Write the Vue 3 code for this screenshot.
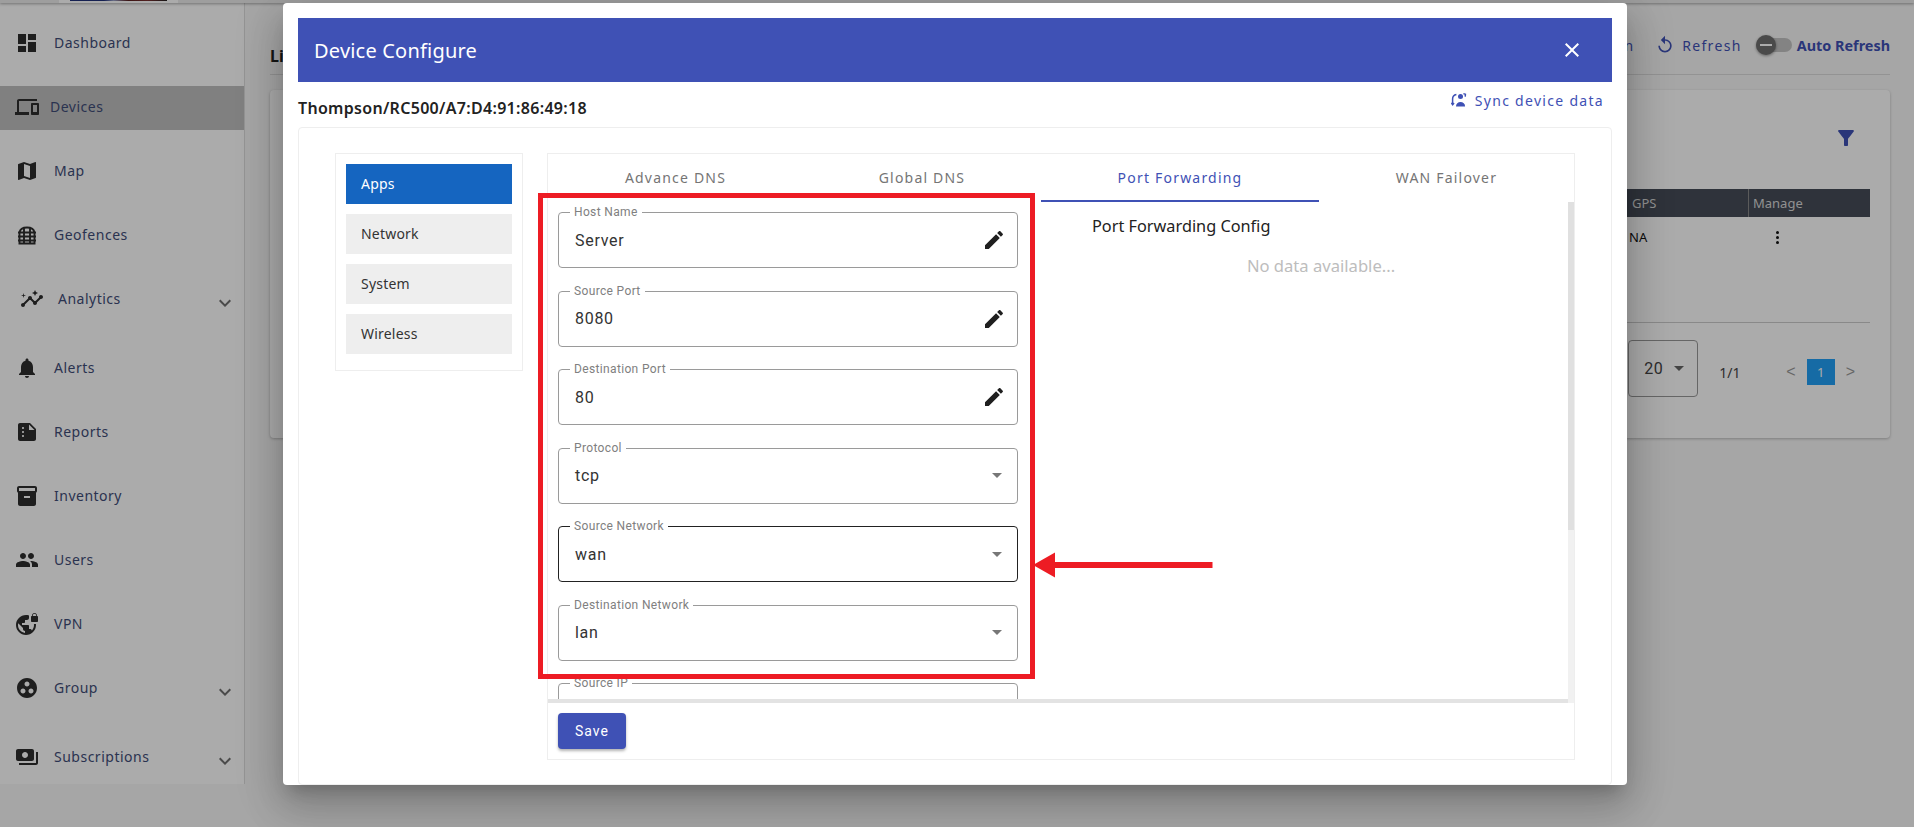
<script setup>
const icons = {
  dashboard: 'M3 13h8V3H3v10zm0 8h8v-6H3v6zm10 0h8V11h-8v10zm0-18v6h8V3h-8z',
  devices: 'M4 6h18V4H4c-1.1 0-2 .9-2 2v11H0v3h14v-3H4V6zm19 2h-6c-.55 0-1 .45-1 1v10c0 .55.45 1 1 1h6c.55 0 1-.45 1-1V9c0-.55-.45-1-1-1zm-1 9h-4v-7h4v7z',
  map: 'M20.5 3l-.16.03L15 5.1 9 3 3.36 4.9c-.21.07-.36.25-.36.48V20.5c0 .28.22.5.5.5l.16-.03L9 18.9l6 2.1 5.64-1.9c.21-.07.36-.25.36-.48V3.5c0-.28-.22-.5-.5-.5zM15 19l-6-2.11V5l6 2.11V19z',
  fence: 'M4.5 20.5V9.5C5 6.5 8 4.5 12 4.5s7 2 7.5 5v11M3 9.5h18M3 13.5h18M3 17.5h18M3.5 20.5h17M9 5v15.5M15 5v15.5',
  insights: 'M21 8c-1.45 0-2.26 1.44-1.93 2.51l-3.55 3.56c-.3-.09-.74-.09-1.04 0l-2.55-2.55C12.27 10.45 11.46 9 10 9c-1.45 0-2.27 1.44-1.93 2.52l-4.56 4.55C2.44 15.74 1 16.55 1 18c0 1.1.9 2 2 2 1.45 0 2.26-1.44 1.93-2.51l4.55-4.56c.3.09.74.09 1.04 0l2.55 2.55C12.73 16.55 13.54 18 15 18c1.45 0 2.27-1.44 1.93-2.52l3.56-3.55c1.07.33 2.51-.48 2.51-1.93 0-1.1-.9-2-2-2zM15 9l.94-2.07L18 6l-2.06-.93L15 3l-.92 2.07L12 6l2.08.93zM3.5 11L4 9l2-.5L4 8l-.5-2L3 8l-2 .5L3 9z',
  bell: 'M12 22c1.1 0 2-.9 2-2h-4c0 1.1.89 2 2 2zm6-6v-5c0-3.07-1.64-5.64-4.5-6.32V4c0-.83-.67-1.5-1.5-1.5s-1.5.67-1.5 1.5v.68C7.63 5.36 6 7.92 6 11v5l-2 2v1h16v-1l-2-2z',
  reports: 'M15 3H5c-1.1 0-2 .9-2 2v14c0 1.1.9 2 2 2h14c1.1 0 2-.9 2-2V9l-6-6zM8 17c-.55 0-1-.45-1-1s.45-1 1-1 1 .45 1 1-.45 1-1 1zm0-4c-.55 0-1-.45-1-1s.45-1 1-1 1 .45 1 1-.45 1-1 1zm0-4c-.55 0-1-.45-1-1s.45-1 1-1 1 .45 1 1-.45 1-1 1zm6 1V4.5l5.5 5.5H14z',
  inventory: 'M20 2H4c-1 0-2 .9-2 2v3.01c0 .72.43 1.34 1 1.69V20c0 1.1 1.1 2 2 2h14c.9 0 2-.9 2-2V8.7c.57-.35 1-.97 1-1.69V4c0-1.1-1-2-2-2zm-5 12H9v-2h6v2zm5-7H4V4l16-.02V7z',
  people: 'M16 11c1.66 0 2.99-1.34 2.99-3S17.66 5 16 5c-1.66 0-3 1.34-3 3s1.34 3 3 3zm-8 0c1.66 0 2.99-1.34 2.99-3S9.66 5 8 5C6.34 5 5 6.34 5 8s1.34 3 3 3zm0 2c-2.33 0-7 1.17-7 3.5V19h14v-2.5c0-2.33-4.67-3.5-7-3.5zm8 0c-.29 0-.62.02-.97.05 1.16.84 1.97 1.97 1.97 3.45V19h6v-2.5c0-2.33-4.67-3.5-7-3.5z',
  vpn: 'M22 4v-.5C22 2.12 20.88 1 19.5 1S17 2.12 17 3.5V4c-.55 0-1 .45-1 1v4c0 .55.45 1 1 1h5c.55 0 1-.45 1-1V5c0-.55-.45-1-1-1zm-.8 0h-3.4v-.5c0-.94.76-1.7 1.7-1.7s1.7.76 1.7 1.7V4zm-2.28 8c.04.33.08.66.08 1 0 2.08-.8 3.97-2.1 5.39-.26-.81-1-1.39-1.9-1.39h-1v-3c0-.55-.45-1-1-1H7v-2h2c.55 0 1-.45 1-1V8h2c1.1 0 2-.9 2-2V3.46c-.95-.3-1.95-.46-3-.46C5.48 3 1 7.48 1 13s4.48 10 10 10 10-4.48 10-10c0-.34-.02-.67-.05-1h-2.03zM10 20.93c-3.95-.49-7-3.85-7-7.93 0-.62.08-1.21.21-1.79L8 16v1c0 1.1.9 2 2 2v1.93z',
  group: 'M12 2C6.48 2 2 6.48 2 12s4.48 10 10 10 10-4.48 10-10S17.52 2 12 2zM8 17.5c-1.38 0-2.5-1.12-2.5-2.5s1.12-2.5 2.5-2.5 2.5 1.12 2.5 2.5-1.12 2.5-2.5 2.5zM9.5 8c0-1.38 1.12-2.5 2.5-2.5s2.5 1.12 2.5 2.5-1.12 2.5-2.5 2.5S9.5 9.38 9.5 8zm6.5 9.5c-1.38 0-2.5-1.12-2.5-2.5s1.12-2.5 2.5-2.5 2.5 1.12 2.5 2.5-1.12 2.5-2.5 2.5z',
  payments: 'M19 14V6c0-1.1-.9-2-2-2H3c-1.1 0-2 .9-2 2v8c0 1.1.9 2 2 2h14c1.1 0 2-.9 2-2zm-9-1c-1.66 0-3-1.34-3-3s1.34-3 3-3 3 1.34 3 3-1.34 3-3 3zm13-6v11c0 1.1-.9 2-2 2H4v-2h17V7h2z'
}
const navItems = [
  { label: 'Dashboard', icon: 'dashboard' },
  { label: 'Devices', icon: 'devices', kind: 'active' },
  { label: 'Map', icon: 'map' },
  { label: 'Geofences', icon: 'fence', kind: 'stroked' },
  { label: 'Analytics', icon: 'insights', kind: 'shifted', more: true },
  { label: 'Alerts', icon: 'bell' },
  { label: 'Reports', icon: 'reports' },
  { label: 'Inventory', icon: 'inventory' },
  { label: 'Users', icon: 'people' },
  { label: 'VPN', icon: 'vpn' },
  { label: 'Group', icon: 'group', more: true },
  { label: 'Subscriptions', icon: 'payments', more: true }
]
const menus = ['Apps', 'Network', 'System', 'Wireless']
const tabs = ['Advance DNS', 'Global DNS', 'Port Forwarding', 'WAN Failover']
const fields = [
  { label: 'Host Name', value: 'Server', type: 'edit' },
  { label: 'Source Port', value: '8080', type: 'edit' },
  { label: 'Destination Port', value: '80', type: 'edit' },
  { label: 'Protocol', value: 'tcp', type: 'select' },
  { label: 'Source Network', value: 'wan', type: 'select', focused: true },
  { label: 'Destination Network', value: 'lan', type: 'select' },
  { label: 'Source IP', value: '', type: 'edit' }
]
</script>

<template>
  <div class="page">
    <header class="appbar">
      <div class="logo"><div class="logo-art"></div></div>
    </header>
    <div class="body">
      <aside class="sidebar">
        <nav class="nav">
          <div
            v-for="item in navItems"
            :key="item.label"
            class="nav-item"
            :class="[item.kind, { expandable: item.more }]"
          >
            <svg class="nav-icon" viewBox="0 0 24 24"><path :d="icons[item.icon]" /></svg>
            <span class="nav-label">{{ item.label }}</span>
            <svg v-if="item.more" class="chevron" viewBox="0 0 24 24"><path d="M16.59 8.59L12 13.17 7.41 8.59 6 10l6 6 6-6z" /></svg>
          </div>
        </nav>
      </aside>
      <main class="main">
        <div class="topline">
          <strong class="list-title">Li</strong>
          <div class="actions">
            <span class="action-text">n</span>
            <svg class="refresh-icon" viewBox="0 0 24 24"><path d="M12 5V1L7 6l5 5V7c3.31 0 6 2.69 6 6s-2.69 6-6 6-6-2.69-6-6H4c0 4.42 3.58 8 8 8s8-3.58 8-8-3.58-8-8-8z" /></svg>
            <span class="action-text refresh-text">Refresh</span>
            <span class="toggle"><span class="knob"><span class="knob-dash"></span></span></span>
            <strong class="auto">Auto Refresh</strong>
          </div>
        </div>
        <section class="card">
          <div class="filter-row">
            <svg class="filter" viewBox="0 0 24 24"><path d="M4.25 5.61C6.27 8.2 10 13 10 13v6c0 .55.45 1 1 1h2c.55 0 1-.45 1-1v-6s3.72-4.8 5.74-7.39C20.25 4.95 19.78 4 18.95 4H5.04c-.83 0-1.3.95-.79 1.61z" /></svg>
          </div>
          <div class="t-head">
            <span></span>
            <span class="t-gps">GPS</span>
            <span class="t-manage">Manage</span>
          </div>
          <div class="t-row">
            <span></span>
            <span class="t-na">NA</span>
            <span class="kebab"><i></i><i></i><i></i></span>
          </div>
          <div class="pager">
            <div class="page-size"><span>20</span><i class="caret dark"></i></div>
            <span class="count">1/1</span>
            <span class="prev">&lt;</span>
            <span class="page-btn">1</span>
            <span class="next">&gt;</span>
          </div>
        </section>
      </main>
    </div>

    <div class="backdrop"></div>

    <div class="modal">
      <div class="modal-head">
        <h2>Device Configure</h2>
        <svg class="close" viewBox="0 0 24 24"><path d="M19 6.41L17.59 5 12 10.59 6.41 5 5 6.41 10.59 12 5 17.59 6.41 19 12 13.41 17.59 19 19 17.59 13.41 12z" /></svg>
      </div>
      <div class="sub-row">
        <strong class="device">Thompson/RC500/A7:D4:91:86:49:18</strong>
        <div class="sync">
          <svg class="sync-icon" viewBox="0 0 16 16">
            <circle cx="9.5" cy="4.6" r="2.5" />
            <path d="M5 14.5c0-3 2-4.6 4.5-4.6s4.6 1.6 4.6 4.6z" />
            <path class="sync-arc" d="M1.6 12.5V7C1.6 4.4 3 3 5.4 2.6" />
            <path class="sync-arc" d="M0.4 10.8l1.2 2 1.4-1.8" />
            <path class="sync-arc" d="M12.4 1.6l2 .6-.2 2.4" />
          </svg>
          <span>Sync device data</span>
        </div>
      </div>
      <div class="config-card">
        <div class="menu">
          <div v-for="(m, i) in menus" :key="m" class="menu-item" :class="{ selected: i === 0 }">{{ m }}</div>
        </div>
        <div class="panel">
          <div class="tabs">
            <div v-for="(t, i) in tabs" :key="t" class="tab" :class="{ current: i === 2 }">{{ t }}</div>
          </div>
          <div class="scroller">
            <div class="form">
              <div v-for="f in fields" :key="f.label" class="field" :class="{ focused: f.focused }">
                <span class="field-label">{{ f.label }}</span>
                <span class="field-value">{{ f.value }}</span>
                <svg v-if="f.type === 'edit'" class="pencil" viewBox="0 0 24 24"><path d="M3 17.25V21h3.75L17.81 9.94l-3.75-3.75L3 17.25zM20.71 7.04c.39-.39.39-1.02 0-1.41l-2.34-2.34c-.39-.39-1.02-.39-1.41 0l-1.83 1.83 3.75 3.75 1.83-1.83z" /></svg>
                <i v-else class="caret"></i>
              </div>
            </div>
            <div class="side">
              <div class="side-title">Port Forwarding Config</div>
              <div class="side-empty">No data available...</div>
            </div>
            <div class="track-v"><div class="thumb-v"></div></div>
            <div class="track-h"></div>
          </div>
          <div class="panel-foot">
            <button class="save" type="button">Save</button>
          </div>
        </div>
      </div>
      <div class="callout"></div>
      <svg class="arrow" width="180" height="26" viewBox="0 0 180 26">
        <path d="M0 13L22 0.5V10H179.5V16H22V25.5z" />
      </svg>
    </div>
  </div>
</template>

<style>
html, body { margin: 0; padding: 0; overflow: hidden; }
</style>

<style scoped>
.page {
  position: relative;
  width: 1914px;
  height: 827px;
  overflow: hidden;
  display: flex;
  flex-direction: column;
  background: #f8f8f8;
  font-family: "Noto Sans", "Open Sans", sans-serif;
  color: #333;
}
.appbar {
  height: 3px;
  flex: none;
  background: #ececec;
  box-shadow: 0 1px 3px rgba(0, 0, 0, 0.35);
  position: relative;
  display: flex;
}
.logo { margin-left: 59px; width: 119px; background: #fff; padding: 0 11px; box-sizing: border-box; }
.logo-art { height: 1px; background: linear-gradient(90deg, #20307a 0%, #20307a 35%, #9aa2c8 45%, #5a2020 60%, #7a3030 80%, #222 100%); }
.body { flex: 1; display: flex; min-height: 0; }
.sidebar {
  width: 244px;
  height: 781px;
  flex: none;
  background: #fff;
  border-right: 1px solid #ddd;
}
.nav { display: flex; flex-direction: column; padding-top: 19px; }
.nav-item {
  height: 44px;
  margin-bottom: 20px;
  display: flex;
  align-items: center;
  padding-left: 15px;
  box-sizing: border-box;
  color: #3f4d78;
  font-size: 14px;
  letter-spacing: 0.5px;
}
.nav-icon { width: 24px; height: 24px; fill: #2e2e2e; flex: none; margin: 0 15px 2px 0; }
.nav-label { margin-bottom: 4px; }
.nav-item.active { background: #bfbfbf; }
.nav-item.active .nav-icon { margin-right: 11px; }
.nav-item.shifted { padding-left: 20px; }
.nav-item.shifted .nav-icon { margin-right: 14px; }
.nav-item.stroked .nav-icon { fill: none; stroke: #2e2e2e; stroke-width: 1.9; }
.nav-item.expandable { height: 49px; padding-bottom: 5px; position: relative; }
.chevron { position: absolute; left: 213px; top: 13px; width: 24px; height: 24px; fill: #6f6f6f; }

.main { flex: 1; margin: 0 24px 0 25px; min-width: 0; }
.topline {
  height: 72px;
  box-sizing: border-box;
  border-bottom: 1px solid #dcdcdc;
  display: flex;
  justify-content: space-between;
  align-items: flex-end;
  padding-bottom: 8px;
}
.list-title { font-size: 16px; font-weight: 700; color: #222; line-height: 20px; }
.actions { display: flex; align-items: center; height: 24px; margin-bottom: 9px; }
.action-text { font-size: 14px; letter-spacing: 1px; color: #3f51b5; }
.refresh-text { letter-spacing: 1.35px; }
.refresh-icon { width: 20px; height: 20px; fill: #3f51b5; margin-left: 21px; margin-right: 7px; }
.toggle { position: relative; width: 36px; height: 14px; border-radius: 7px; background: #c4c4c4; margin: 0 5px 0 14px; }
.knob {
  position: absolute; left: 0; top: -3px; width: 20px; height: 20px; border-radius: 50%;
  background: #6f6f6f; box-shadow: 0 1px 3px rgba(0,0,0,.4); display: flex; align-items: center; justify-content: center;
}
.knob-dash { width: 12px; height: 2px; background: #fff; }
.auto { font-size: 14.4px; font-weight: 700; color: #3f51b5; }
.card {
  margin-top: 15px;
  height: 348px;
  background: #fff;
  border-radius: 4px;
  box-shadow: 0 1px 3px rgba(0, 0, 0, 0.25);
  padding: 0 20px;
  box-sizing: border-box;
}
.filter-row { height: 99px; display: flex; justify-content: flex-end; padding: 36px 12px 0 0; box-sizing: border-box; }
.filter { width: 24px; height: 24px; fill: #3f51b5; }
.t-head {
  display: grid;
  grid-template-columns: 1fr 120px 122px;
  height: 28px;
  background: #464c58;
  color: #d8d8d8;
  font-size: 13px;
  line-height: 28px;
}
.t-gps { padding-left: 4px; }
.t-manage { padding-left: 4px; border-left: 1px solid #888; }
.t-row {
  display: grid;
  grid-template-columns: 1fr 120px 122px;
  height: 106px;
  box-sizing: border-box;
  border-bottom: 1px solid #ccc;
  font-size: 13px;
  color: #111;
  padding-top: 10px;
}
.t-na { padding-left: 1px; line-height: 20px; }
.kebab { display: flex; flex-direction: column; gap: 2px; padding: 4px 0 0 28px; }
.kebab i { width: 3px; height: 3px; border-radius: 50%; background: #111; display: block; }
.pager { display: flex; align-items: center; justify-content: flex-end; height: 90px; padding-right: 15px; box-sizing: border-box; color: #444; font-size: 14px; }
.page-size {
  width: 70px; height: 57px; box-sizing: border-box; border: 1px solid #999; border-radius: 4px;
  display: flex; align-items: center; padding-left: 15px; font-family: Roboto, sans-serif; font-size: 16px; gap: 11px;
  letter-spacing: 0.5px;
}
.count { margin-left: 21px; margin-top: 8px; font-size: 14px; width: 67px; }
.prev, .next { color: #999; font-size: 16px; font-family: "Liberation Sans", sans-serif; margin-top: 8px; }
.prev { margin-right: 11px; }
.next { margin-left: 11px; }
.page-btn { width: 28px; height: 26px; margin-top: 8px; background: #21a0f6; color: #fff; text-align: center; line-height: 26px; font-size: 13px; }

.backdrop { position: absolute; inset: 0; background: rgba(0, 0, 0, 0.33); }

.modal {
  position: absolute;
  left: 283px;
  top: 3px;
  width: 1344px;
  height: 782px;
  box-sizing: border-box;
  padding: 15px 15px 0;
  background: #fff;
  border-radius: 4px;
  box-shadow: 0 11px 15px -7px rgba(0,0,0,.2), 0 24px 38px 3px rgba(0,0,0,.14), 0 9px 46px 8px rgba(0,0,0,.12);
  display: flex;
  flex-direction: column;
}
.modal-head {
  height: 64px;
  flex: none;
  background: #3f51b5;
  color: #fff;
  display: flex;
  align-items: center;
  justify-content: space-between;
  padding: 0 28px 0 16px;
}
.modal-head h2 { margin: 0; font-size: 20px; font-weight: 400; letter-spacing: 0.2px; }
.close { width: 24px; height: 24px; fill: #fff; }
.sub-row {
  height: 45px;
  flex: none;
  display: flex;
  justify-content: space-between;
}
.device { font-size: 16px; font-weight: 600; color: #222; line-height: 20px; padding-top: 16px; letter-spacing: 0.3px; }
.sync { display: flex; align-items: center; height: 36px; padding-right: 8px; color: #3f51b5; font-size: 14px; letter-spacing: 1.3px; gap: 8px; }
.sync-icon { width: 16px; height: 16px; fill: #3f51b5; }
.sync-arc { fill: none; stroke: #3f51b5; stroke-width: 1.5; }
.config-card {
  flex: 1;
  display: flex;
  box-sizing: border-box;
  border: 1px solid #eee;
  border-radius: 4px;
  padding: 25px 0 0 36px;
  min-height: 0;
}
.menu {
  width: 188px;
  height: 218px;
  box-sizing: border-box;
  border: 1px solid #eee;
  padding: 10px;
  display: flex;
  flex-direction: column;
  gap: 10px;
  flex: none;
}
.menu-item {
  height: 40px;
  flex: none;
  background: #eee;
  color: #333;
  font-size: 14px;
  line-height: 40px;
  padding-left: 15px;
  letter-spacing: 0.2px;
}
.menu-item.selected { background: #1565c0; color: #fff; }
.panel {
  width: 1028px;
  height: 607px;
  margin-left: 24px;
  flex: none;
  display: flex;
  flex-direction: column;
  box-sizing: border-box;
  border: 1px solid #eee;
}
.tabs { display: grid; grid-template-columns: 255px 238px 278px 255px; grid-template-rows: 48px; height: 48px; flex: none; }
.tab {
  text-align: center;
  font-size: 14px;
  letter-spacing: 1.2px;
  line-height: 48px;
  color: #757575;
  box-sizing: border-box;
}
.tab.current { color: #3f51b5; border-bottom: 2px solid #3f51b5; }
.scroller { position: relative; height: 501px; flex: none; overflow: hidden; display: flex; }
.form { width: 460px; margin-left: 10px; padding-top: 10px; display: flex; flex-direction: column; gap: 22.5px; flex: none; }
.field {
  position: relative;
  height: 56px;
  flex: none;
  box-sizing: border-box;
  border: 1px solid #9a9a9a;
  border-radius: 4px;
  display: flex;
  align-items: center;
  justify-content: space-between;
  padding: 0 11px 0 16px;
  font-family: Roboto, sans-serif;
}
.field.focused { border-color: #222; }
.field-label {
  position: absolute;
  left: 11px;
  top: -8px;
  padding: 0 4px;
  background: #fff;
  color: #808080;
  font-size: 12px;
  line-height: 14px;
  letter-spacing: 0.35px;
}
.field-value { font-size: 16px; letter-spacing: 0.7px; color: #333; }
.pencil { width: 24px; height: 24px; fill: #1f1f1f; }
.caret { display: block; width: 0; height: 0; border-left: 5px solid transparent; border-right: 5px solid transparent; border-top: 5px solid #777; margin-right: 4px; }
.caret.dark { border-top-color: #666; margin-right: 0; }
.side { margin-left: 56px; width: 494px; padding-top: 12px; }
.side-title { padding-left: 18px; font-size: 16.3px; line-height: 24px; color: #222; }
.side-empty { margin-top: 16px; text-align: center; font-size: 16.6px; line-height: 24px; color: #bdbdbd; }
.track-v { position: absolute; right: 0; top: 0; bottom: 0; width: 6px; background: #f1f1f1; }
.thumb-v { height: 328px; background: #e0e0e0; }
.track-h { position: absolute; left: 0; right: 6px; bottom: 0; height: 4px; background: #e3e3e3; }
.panel-foot { flex: 1; padding: 10px 0 0 10px; }
.save {
  width: 68px; height: 36px; border: 0; border-radius: 4px; background: #3f51b5; color: #fff;
  font-family: Roboto, sans-serif; font-size: 14px; letter-spacing: 1px;
  box-shadow: 0 2px 3px rgba(0,0,0,.3);
}
.callout {
  position: absolute;
  left: 255px;
  top: 190px;
  width: 497px;
  height: 486px;
  box-sizing: border-box;
  border: 5px solid #ed1c24;
}
.arrow { position: absolute; left: 750px; top: 549px; fill: #ed1c24; }
</style>
